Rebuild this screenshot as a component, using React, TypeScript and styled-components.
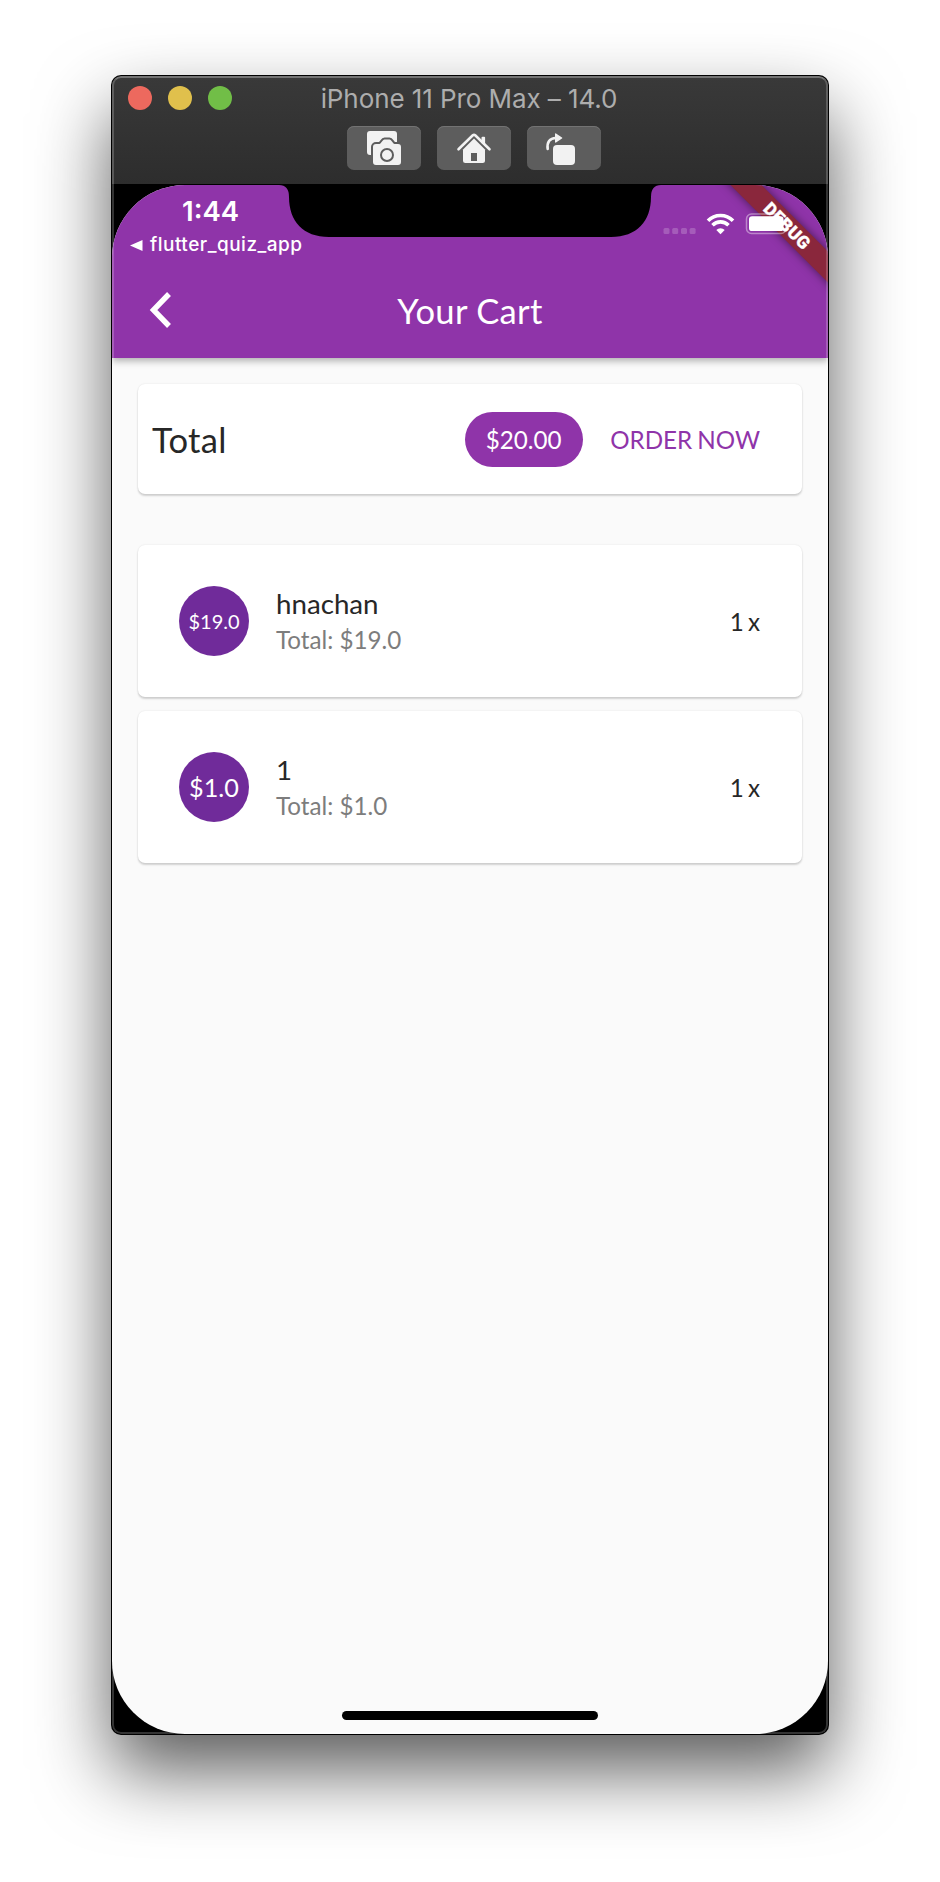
import React from "react";
import styled, { createGlobalStyle } from "styled-components";

const Global = createGlobalStyle`
  * { box-sizing: border-box; }
  body { margin: 0; background: #fff; }
`;

const system = `Inter, "Liberation Sans", sans-serif`;
const purple = "#8f34a9";

const Desktop = styled.main`
  height: 1882px;
  padding: 76px 112px 0;
  overflow: hidden;
  background: #fff;
  font-family: Lato, sans-serif;
`;

const Simulator = styled.section`
  position: relative;
  display: flex;
  flex-direction: column;
  width: 716px;
  height: 1658px;
  border-radius: 9px;
  background: #000;
  box-shadow: 0 0 0 1px #000, 0 36px 74px rgba(0, 0, 0, 0.65);
  overflow: hidden;
  &::after {
    content: "";
    position: absolute;
    inset: 0;
    border-radius: inherit;
    border: 2px solid rgba(255, 255, 255, 0.2);
    border-top-color: rgba(255, 255, 255, 0.3);
    pointer-events: none;
  }
`;

const WindowBar = styled.header`
  height: 108px;
  flex: none;
  background: linear-gradient(#393939, #2d2d2d);
`;

const TitleRow = styled.div`
  display: grid;
  grid-template-columns: 1fr auto 1fr;
  align-items: center;
  height: 44px;
  padding: 0 18px 0 16px;
`;

const Lights = styled.div`
  display: flex;
  gap: 16px;
`;

const Light = styled.span<{ $color: string }>`
  width: 24px;
  height: 24px;
  border-radius: 50%;
  background: ${(p) => p.$color};
`;

const WindowTitle = styled.h1`
  margin: 0;
  padding-top: 2px;
  font: 400 26px/42px ${system};
  letter-spacing: -0.08px;
  color: #adadad;
  white-space: nowrap;
`;

const Tools = styled.div`
  display: flex;
  justify-content: center;
  gap: 16px;
  padding: 6px 0 0 8px;
`;

const Tool = styled.button`
  width: 74px;
  height: 44px;
  padding: 0;
  border: 0;
  border-radius: 7px;
  background: #5d5d5d;
  box-shadow: inset 0 1px #737373;
  svg { display: block; }
`;

const Screen = styled.div`
  position: relative;
  display: flex;
  flex-direction: column;
  height: 1549px;
  margin-top: 1px;
  border-radius: 73px;
  overflow: hidden;
  background: #fafafa;
`;

const AppHeader = styled.div`
  position: relative;
  flex: none;
  height: 173px;
  background: ${purple};
  color: #fff;
  box-shadow: 0 3px 7px rgba(0, 0, 0, 0.3);
`;

const StatusBar = styled.div`
  position: relative;
  z-index: 1;
  display: flex;
  justify-content: space-between;
  height: 76px;
  font-family: ${system};
`;

const StatusLeft = styled.div`
  padding: 8px 0 0 18px;
`;

const Clock = styled.div`
  padding-left: 52px;
  font-size: 27.5px;
  font-weight: 600;
  line-height: 37px;
`;

const ReturnLink = styled.div`
  display: flex;
  align-items: center;
  gap: 7px;
  font-size: 19px;
  font-weight: 500;
  line-height: 30px;
  letter-spacing: 0.5px;
`;

const StatusIcons = styled.svg`
  margin: 20px 38px 0 0;
`;

const Notch = styled.svg`
  position: absolute;
  left: 167px;
  top: 0;
`;

const Ribbon = styled.div`
  position: absolute;
  left: 595px;
  top: 30px;
  width: 160px;
  height: 22px;
  transform: rotate(45deg);
  background: #8a273c;
  box-shadow: 0 0 10px rgba(0, 0, 0, 0.5);
  font: 900 17.6px/22px Roboto, sans-serif;
  -webkit-text-stroke: 0.3px #fff;
  letter-spacing: 0.3px;
  text-align: center;
`;

const NavRow = styled.div`
  display: grid;
  grid-template-columns: 97px 1fr 97px;
  align-items: center;
  height: 97px;
`;

const BackIcon = styled.svg`
  margin-left: 36px;
`;

const PageTitle = styled.h2`
  margin: 0;
  padding-top: 2px;
  text-align: center;
  font-size: 34.6px;
  font-weight: 400;
  line-height: 42px;
  letter-spacing: 0.3px;
`;

const Content = styled.div`
  display: flex;
  flex-direction: column;
  flex: 1;
  padding: 26px 26px 0;
`;

const Card = styled.article`
  display: flex;
  align-items: center;
  border-radius: 7px;
  background: #fff;
  box-shadow: 0 2px 2px rgba(0, 0, 0, 0.16), 0 0 2px rgba(0, 0, 0, 0.1);
  color: #272727;
`;

const Summary = styled(Card)`
  height: 110px;
  padding: 0 42px 0 14px;
  margin-bottom: 50.5px;
`;

const SummaryLabel = styled.span`
  flex: 1;
  font-size: 34.6px;
  letter-spacing: 0.3px;
`;

const Chip = styled.span`
  width: 118px;
  height: 55px;
  margin-right: 27.500px;
  border-radius: 28px;
  background: ${purple};
  color: #fff;
  font-size: 24.2px;
  line-height: 56px;
  text-align: center;
`;

const OrderButton = styled.button`
  padding: 1px 0 0;
  border: 0;
  background: none;
  color: ${purple};
  font: 400 24.2px/30px Lato, sans-serif;
  word-spacing: -1px;
  white-space: nowrap;
`;

const Item = styled(Card)`
  height: 152px;
  padding: 0 42px 0 41px;
  margin-bottom: 14px;
`;

const Price = styled.span<{ $size: number; $line: number }>`
  width: 70px;
  height: 70px;
  border-radius: 50%;
  background: #702b9a;
  color: #fff;
  font-size: ${(p) => p.$size}px;
  line-height: ${(p) => p.$line}px;
  text-align: center;
`;

const ItemText = styled.div`
  flex: 1;
  padding: 1px 0 0 27px;
`;

const ItemName = styled.div`
  font-size: 27.7px;
  line-height: 36px;
`;

const ItemTotal = styled.div`
  font-size: 24.2px;
  line-height: 35px;
  color: #7d7d7d;
`;

const Quantity = styled.span`
  padding-top: 1px;
  font-size: 24.2px;
  word-spacing: -2px;
`;

const HomeBar = styled.div`
  width: 256px;
  height: 9px;
  margin: auto auto 14px;
  border-radius: 5px;
  background: #000;
`;

const items = [
  { name: "hnachan", price: "$19.0", qty: "1 x", size: 20, line: 70 },
  { name: "1", price: "$1.0", qty: "1 x", size: 25.2, line: 71 },
];

const cameraBody =
  "M29 18h3.5c1.500 0 3-4.500 5-4.500h5c2 0 3.500 4.500 5 4.500H51a3 3 0 0 1 3 3v15a3 3 0 0 1-3 3H29a3 3 0 0 1-3-3V21a3 3 0 0 1 3-3z";

export default function App() {
  return (
    <Desktop>
      <Global />
      <Simulator>
        <WindowBar>
          <TitleRow>
            <Lights>
              <Light $color="#ed695e" />
              <Light $color="#e0c04c" />
              <Light $color="#71be47" />
            </Lights>
            <WindowTitle>iPhone 11 Pro Max – 14.0</WindowTitle>
          </TitleRow>
          <Tools>
            <Tool aria-label="Screenshot">
              <svg width="74" height="44" fill="#f2f2f2">
                <rect x="20" y="5" width="30" height="24" rx="3" />
                <path d={cameraBody} stroke="#5d5d5d" strokeWidth="4" />
                <path d={cameraBody} />
                <circle cx="40" cy="29" r="6" fill="none" stroke="#5d5d5d" strokeWidth="2" />
              </svg>
            </Tool>
            <Tool aria-label="Home">
              <svg width="74" height="44" fill="#f2f2f2">
                <path d="M44.500 17v-5.200a1 1 0 0 1 1-1h1.600a1 1 0 0 1 1 1V20z" />
                <path d="M21.500 23.300 35.800 9.300q1.200-1 2.400 0L52.500 23.300" fill="none" stroke="#f2f2f2" strokeWidth="2.600" strokeLinecap="round" />
                <path d="M37 12.500 48 23.400V34.500a2.500 2.500 0 0 1-2.500 2.500H28.500a2.500 2.500 0 0 1-2.500-2.500V23.400z" />
                <rect x="34" y="27" width="6" height="8" fill="#5d5d5d" />
              </svg>
            </Tool>
            <Tool aria-label="Rotate">
              <svg width="74" height="44" fill="#f2f2f2">
                <rect x="26" y="19" width="22" height="20" rx="4" />
                <path d="M20.700 23c-1-6.500 2-11 8-11" fill="none" stroke="#f2f2f2" strokeWidth="2.600" strokeLinecap="round" />
                <path d="M28 8q0-1 1-.500l6 4q.8.500 0 1l-6 4q-1 .5-1-.5z" />
              </svg>
            </Tool>
          </Tools>
        </WindowBar>
        <Screen>
          <AppHeader>
            <Ribbon>DEBUG</Ribbon>
            <StatusBar>
              <StatusLeft>
                <Clock>1:44</Clock>
                <ReturnLink>
                  <svg width="13" height="13" fill="#fff">
                    <path d="M0 6.500 12.500 1v11z" />
                  </svg>
                  flutter_quiz_app
                </ReturnLink>
              </StatusLeft>
              <StatusIcons width="128" height="40" viewBox="0 0 128 40">
                <g fill="#fff" fillOpacity=".2">
                  <rect x="1.500" y="23" width="6" height="6" rx="1.500" />
                  <rect x="10.200" y="23" width="6" height="6" rx="1.500" />
                  <rect x="19" y="23" width="6" height="6" rx="1.500" />
                  <rect x="27.600" y="23" width="6" height="6" rx="1.500" />
                </g>
                <g fill="none" stroke="#fff" strokeWidth="3.600">
                  <path d="M46 15.800a17.300 17.300 0 0 1 25 0" />
                  <path d="M50.500 20.200a11.300 11.300 0 0 1 16 0" />
                </g>
                <path d="M54.300 25a6 6 0 0 1 8.400 0l-4.200 4.300z" fill="#fff" />
                <rect x="84.500" y="9" width="39.500" height="19.500" rx="5" fill="none" stroke="#fff" strokeOpacity=".4" strokeWidth="1.500" />
                <rect x="87" y="11.300" width="34.500" height="14.800" rx="3.200" fill="#fff" />
                <path d="M125.700 15.500q4 3 0 6.500z" fill="#fff" fillOpacity=".4" />
              </StatusIcons>
            </StatusBar>
            <NavRow>
              <BackIcon width="26" height="36" fill="none" stroke="#fff" strokeWidth="5.400">
                <path d="M21 2 5.500 18 21 34" />
              </BackIcon>
              <PageTitle>Your Cart</PageTitle>
            </NavRow>
            <Notch width="382" height="53" viewBox="0 0 382 53">
              <path d="M0 0H382Q372 0 372 12C372 36 358 52 332 52H50C24 52 10 36 10 12Q10 0 0 0z" />
            </Notch>
          </AppHeader>
          <Content>
            <Summary>
              <SummaryLabel>Total</SummaryLabel>
              <Chip>$20.00</Chip>
              <OrderButton>ORDER NOW</OrderButton>
            </Summary>
            {items.map((item) => (
              <Item key={item.name}>
                <Price $size={item.size} $line={item.line}>{item.price}</Price>
                <ItemText>
                  <ItemName>{item.name}</ItemName>
                  <ItemTotal>Total: {item.price}</ItemTotal>
                </ItemText>
                <Quantity>{item.qty}</Quantity>
              </Item>
            ))}
            <HomeBar />
          </Content>
        </Screen>
      </Simulator>
    </Desktop>
  );
}
